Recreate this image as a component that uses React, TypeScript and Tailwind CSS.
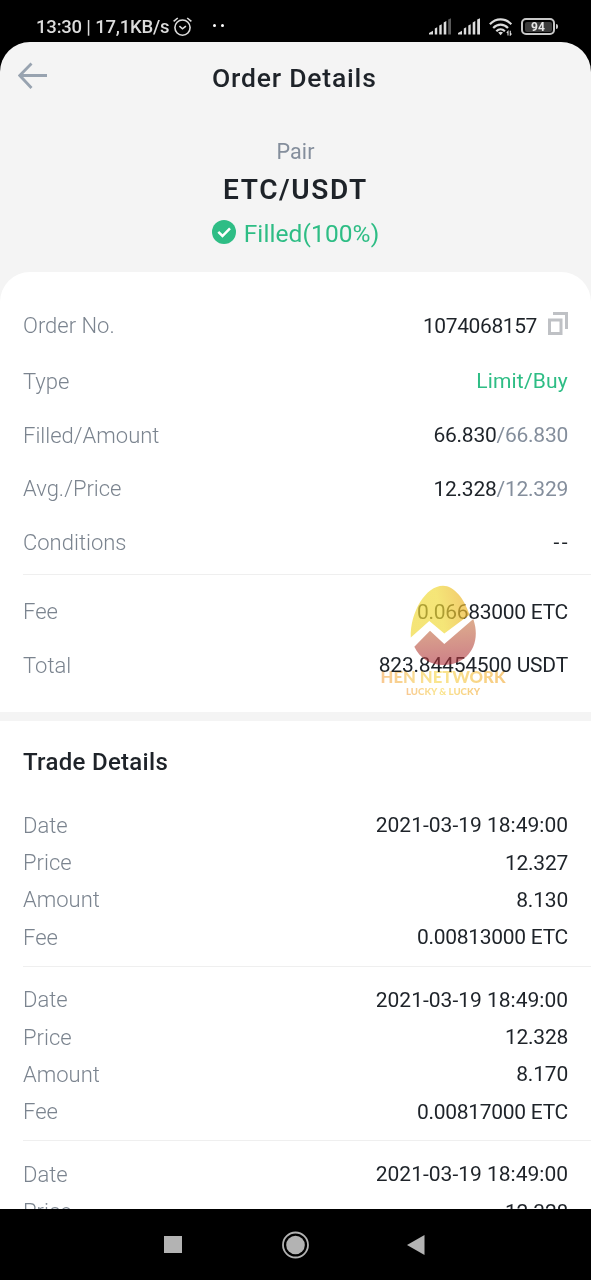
import type { ReactNode } from 'react';

const trades = [
  { date: '2021-03-19 18:49:00', price: '12.327', amount: '8.130', fee: '0.00813000 ETC' },
  { date: '2021-03-19 18:49:00', price: '12.328', amount: '8.170', fee: '0.00817000 ETC' },
  { date: '2021-03-19 18:49:00', price: '12.328', amount: '8.170', fee: '0.00817000 ETC' },
];

function Signal({ weak = false }: { weak?: boolean }) {
  return (
    <svg width="23" height="17" viewBox="0 0 23 17" fill="#dcdcdc">
      <path d="M0 16.5V15l4-2.2v3.7z" />
      <path d="M5.8 10.6l2.4-1.3v7.2H5.8z" />
      <path d="M10.3 7.6l2.4-1.3v10.2h-2.4z" />
      <path d="M14.7 4.4l2.6-1.3v13.4h-2.6z" />
      <path d="M19.2 1.6L22 .3v16.2h-2.8z" fill={weak ? '#5a5a5a' : '#dcdcdc'} />
    </svg>
  );
}

function StatusBar() {
  return (
    <div className="flex h-[42px] items-center pt-[11px] pl-[36px] text-[#dcdcdc]">
      <span className="w-[136px] pt-px text-[18.5px] leading-none font-medium tracking-[-0.2px] whitespace-nowrap">
        13:30 | 17,1KB/s
      </span>
      <svg width="20" height="20" viewBox="0 0 20 20" fill="none" stroke="#dcdcdc" strokeWidth="1.6">
        <circle cx="10.5" cy="10.6" r="7.6" />
        <path d="M7.4 9.2l3.1 2.6 3.4-2.6M1.6 4.4L5.8 1M15.2 1l4.2 3.4" />
      </svg>
      <span className="ml-[21px] flex gap-[5px] pb-[3px]">
        <span className="size-[3px] rounded-full bg-white" />
        <span className="size-[3px] rounded-full bg-white" />
      </span>
      <div className="mr-[33px] ml-auto flex items-center">
        <Signal weak />
        <span className="ml-[6px] flex">
          <Signal />
        </span>
        <svg className="ml-[8px]" width="24" height="18" viewBox="0 0 24 18" fill="none" stroke="#dcdcdc" strokeWidth="2.2">
          <path d="M.9 6.2c6.2-6.4 15.2-6.4 21.4 0" />
          <path d="M4.2 9.9c4.3-4.4 10.500-4.400 14.800 0" />
          <path d="M7.3 13.2c2.6-2.6 6-2.6 8.6 0" />
          <path d="M11.6 17.2l-2.4-2.6c1.5-1.2 3.3-1.2 4.8 0z" fill="#dcdcdc" stroke="none" />
          <path d="M19 17.4v-4l-1.2 1.4M21.3 12.8v4.2l1.2-1.4" strokeWidth="1.1" />
        </svg>
        <div className="ml-[8px] flex h-[17px] w-[34px] items-center justify-center rounded-[5px] border-2 border-[#c8c8c8] p-[1.5px]">
          <span className="flex h-full w-full items-center justify-center rounded-[2px] bg-[#3c3c3c] text-[12px] leading-none font-bold text-[#e8e8e8]">
            94
          </span>
        </div>
        <span className="ml-[1px] h-[5px] w-[2px] rounded-r bg-[#c8c8c8]" />
      </div>
    </div>
  );
}

function Row({ label, size, children }: { label: string; size: string; children: ReactNode }) {
  return (
    <div className={`flex items-center justify-between pt-px pr-[23px] ${size}`}>
      <span className="text-[22px] font-light text-[#7b848f]">{label}</span>
      <span className="flex items-center text-[#1e2329]">{children}</span>
    </div>
  );
}

function Watermark() {
  return (
    <div className="pointer-events-none absolute top-[312px] left-[378px] mix-blend-multiply">
      <svg width="130" height="114" viewBox="378 584 130 114">
        <defs>
          <linearGradient id="name">
            <stop offset="0" stopColor="#f8c892" />
            <stop offset="0.45" stopColor="#fae690" />
            <stop offset="1" stopColor="#f7ca82" />
          </linearGradient>
        </defs>
        <g fontFamily="Lato, sans-serif" fontWeight="900" fill="url(#name)">
          <text x="380.5" y="682.7" fontSize="16.5" textLength="125" lengthAdjust="spacingAndGlyphs">
            HEN NETWORK
          </text>
          <text x="406" y="695" fontSize="9.8" textLength="74" lengthAdjust="spacingAndGlyphs">
            LUCKY &amp; LUCKY
          </text>
        </g>
      </svg>
    </div>
  );
}

function Egg() {
  return (
    <svg className="pointer-events-none absolute top-[312px] left-[408px]" width="70" height="84" viewBox="408 584 70 84">
      <defs>
        <linearGradient id="shell" x1="0" x2="1" y1="0.6" y2="0.4">
          <stop offset="0" stopColor="#f0d838" />
          <stop offset="0.5" stopColor="#f0da38" />
          <stop offset="1" stopColor="#ecb028" />
        </linearGradient>
        <linearGradient id="base" x1="0.3" x2="0.4" y1="0" y2="1">
          <stop offset="0" stopColor="#c87a42" />
          <stop offset="1" stopColor="#ac2b38" />
        </linearGradient>
      </defs>
      <path
        d="M410.800 637.500C410 612 426 585.800 443 585.800c11 0 21.500 13 26.500 29L444.300 633.500 429.300 621z"
        fill="url(#shell)"
        opacity="0.68"
      />
      <path
        d="M414.300 646.700L430 630.700 444.300 644 473.300 619C475.200 625 475.800 629 475.800 633.500 475.800 652.500 462 665 443.300 665c-13 0-23.500-6.800-29-18.300z"
        fill="url(#base)"
        opacity="0.6"
      />
    </svg>
  );
}

function NavBar() {
  return (
    <div className="flex h-[71px] shrink-0 items-center bg-black pl-[164px]">
      <span className="h-[17px] w-[18px] bg-[#b3b3b3]" />
      <svg className="ml-[100px]" width="28" height="28" viewBox="0 0 28 28">
        <circle cx="13.500" cy="14" r="12.500" fill="none" stroke="#b3b3b3" strokeWidth="1.800" />
        <circle cx="13.500" cy="14" r="9.300" fill="#b3b3b3" />
      </svg>
      <svg className="ml-[97px]" width="18" height="20" viewBox="0 0 18 20">
        <path d="M17.500 0v20L0 10z" fill="#b3b3b3" />
      </svg>
    </div>
  );
}

export default function App() {
  return (
    <div className="flex h-[1280px] w-[591px] flex-col overflow-hidden bg-black font-['Roboto',sans-serif] text-[21px] leading-none">
      <StatusBar />

      <main className="flex min-h-0 flex-1 flex-col overflow-hidden rounded-t-[30px] bg-[#f4f4f4]">
        <header className="flex h-[72px] shrink-0 items-center pl-[18px]">
          <svg className="-mt-[4px]" width="30" height="28" viewBox="0 0 30 28" fill="none" stroke="#98a3b0" strokeWidth="2.800">
            <path d="M29 13.500H2M13.500 1.500L1.800 13.500l11.700 12.500" />
          </svg>
          <h1 className="ml-[164px] text-[26.5px] font-medium tracking-[0.8px] text-[#1e2329]">Order Details</h1>
        </header>

        <div className="flex h-[158px] shrink-0 flex-col items-center">
          <p className="mt-[27px] text-[21.5px] tracking-[0.1px] text-[#848e9c]">Pair</p>
          <p className="mt-[13px] text-[28px] font-semibold tracking-[1.6px] text-[#1e2329]">ETC/USDT</p>
          <p className="mt-[18px] flex items-center gap-[8px] text-[24.5px] tracking-[0.1px] text-[#2ebd85]">
            <svg className="-mt-[4px]" width="24" height="24" viewBox="0 0 24 24">
              <circle cx="12" cy="12" r="12" fill="#2ebd85" />
              <path d="M6.300 11.800l4.200 4.200 7.500-7.700" fill="none" stroke="#fff" strokeWidth="2.500" />
            </svg>
            Filled(100%)
          </p>
        </div>

        <div className="relative min-h-0 flex-1 overflow-hidden rounded-t-[30px] bg-white">
          <section className="h-[440px] pt-[25px] pl-[23px]">
            <Row label="Order No." size="h-[57px]">
              <span className="tracking-[-0.4px]">1074068157</span>
              <svg className="-mt-[5px] ml-[11px]" width="20" height="23" viewBox="0 0 20 23" fill="none" stroke="#bfc1c5" strokeWidth="3">
                <path d="M1.500 8h11.500v13.500H1.500zM5 1.500h13.500V17" />
              </svg>
            </Row>
            <Row label="Type" size="h-[54px]">
              <span className="tracking-[0.2px] text-[#2ebd85]">Limit/Buy</span>
            </Row>
            <Row label="Filled/Amount" size="h-[54px]">
              <span className="tracking-[-0.25px]">
                66.830<span className="text-[#848e9c]">/66.830</span>
              </span>
            </Row>
            <Row label="Avg./Price" size="h-[53px]">
              <span className="tracking-[-0.25px]">
                12.328<span className="text-[#848e9c]">/12.329</span>
              </span>
            </Row>
            <Row label="Conditions" size="h-[54px]">
              <span className="-mr-[2px] tracking-[2.5px]">--</span>
            </Row>
            <div className="mt-[5px] border-t border-[#efefef] pt-[10px]">
              <Row label="Fee" size="h-[53px]">
                <span className="tracking-[-0.28px]">0.06683000 ETC</span>
              </Row>
              <Row label="Total" size="h-[54px]">
                <span className="tracking-[-0.2px]">823.84454500 USDT</span>
              </Row>
            </div>
          </section>

          <div className="h-[9px] bg-[#f4f4f4]" />

          <section className="pl-[23px]">
            <h2 className="flex h-[71px] items-center pt-[11px] text-[24px] font-medium tracking-[0.3px] text-[#1e2329]">
              Trade Details
            </h2>
            {trades.map((trade, i) => (
              <div key={i} className="border-b border-[#efefef] pt-[14.75px] pb-[9.75px]">
                <Row label="Date" size="h-[37.25px]">
                  {trade.date}
                </Row>
                <Row label="Price" size="h-[37.25px]">
                  <span className="tracking-[-0.25px]">{trade.price}</span>
                </Row>
                <Row label="Amount" size="h-[37.25px]">
                  <span className="tracking-[-0.2px]">{trade.amount}</span>
                </Row>
                <Row label="Fee" size="h-[37.25px]">
                  <span className="tracking-[-0.28px]">{trade.fee}</span>
                </Row>
              </div>
            ))}
          </section>

          <Watermark />
          <Egg />
        </div>
      </main>

      <NavBar />
    </div>
  );
}
